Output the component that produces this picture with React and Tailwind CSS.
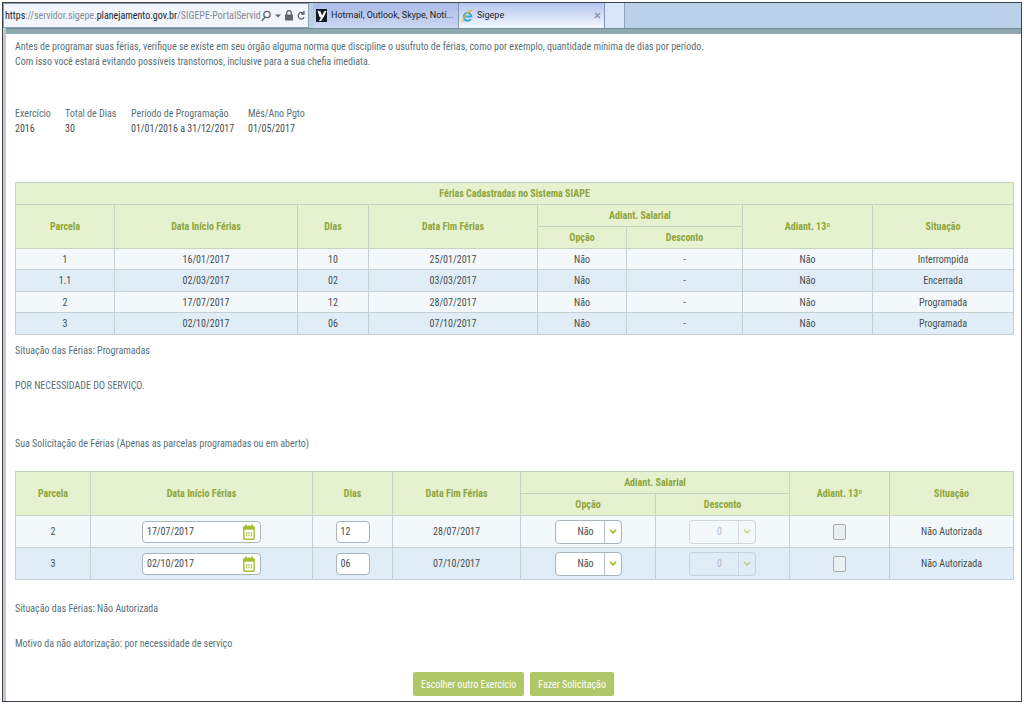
import React, { useState } from "react";

const cadastradas = [
  { parcela: "1", inicio: "16/01/2017", dias: "10", fim: "25/01/2017", situacao: "Interrompida" },
  { parcela: "1.1", inicio: "02/03/2017", dias: "02", fim: "03/03/2017", situacao: "Encerrada" },
  { parcela: "2", inicio: "17/07/2017", dias: "12", fim: "28/07/2017", situacao: "Programada" },
  { parcela: "3", inicio: "02/10/2017", dias: "06", fim: "07/10/2017", situacao: "Programada" },
];

const solicitadas = [
  { parcela: "2", inicio: "17/07/2017", dias: "12", fim: "28/07/2017" },
  { parcela: "3", inicio: "02/10/2017", dias: "06", fim: "07/10/2017" },
];

const resumo = [
  { label: "Exercício", value: "2016", width: "w-[50px]" },
  { label: "Total de Dias", value: "30", width: "w-[66px]" },
  { label: "Período de Programação", value: "01/01/2016 a 31/12/2017", width: "w-[117px]" },
  { label: "Mês/Ano Pgto", value: "01/05/2017", width: "w-[80px]" },
];

const cell = "border border-[#c3d0d3] p-0 text-center";
const head = "border border-[#c5d3c3] p-0 text-center font-bold";

const CalendarIcon = () => (
  <svg className="block h-4 w-3" viewBox="0 0 12 16" fill="none">
    <rect x="0.8" y="2.8" width="10.4" height="12.4" rx="1" stroke="#a3bf2f" strokeWidth="1.4" />
    <path d="M0.5 2.5h11v3.2H0.5z" fill="#a3bf2f" />
    <path d="M3 0.5v3M9 0.5v3" stroke="#a3bf2f" strokeWidth="1.8" />
    <path d="M5 1.5h2v1.5H5z" fill="#a3bf2f" />
    <path d="M3 9h1.3M5.4 9h1.3M7.8 9h1.3M3 11.5h1.3M5.4 11.5h1.3M7.8 11.5h1.3" stroke="#a3bf2f" strokeWidth="1.3" />
  </svg>
);

const SelectBox = ({ label, value, options, disabled }) => (
  <div
    className={
      disabled
        ? "relative mx-auto h-6 w-[67px] rounded border border-[#a9b8c2] opacity-50"
        : "relative mx-auto h-6 w-[67px] rounded border border-[#a9b4bb] bg-white"
    }
  >
    <select
      aria-label={label}
      defaultValue={value}
      disabled={disabled}
      className="block h-full w-full appearance-none bg-transparent pr-[18px] pl-[22px] text-left text-[#454e52] opacity-100 disabled:pl-[27px] disabled:text-[#76858c]"
    >
      {options.map((o) => (
        <option key={o}>{o}</option>
      ))}
    </select>
    <span className="pointer-events-none absolute inset-y-0 right-0 flex w-[17px] items-center justify-center border-l border-[#b4bfc5]">
      <svg className="h-[5px] w-2" viewBox="0 0 8 5" fill="none">
        <path d="M1 0.8l3 3 3-3" stroke="#a3bf2f" strokeWidth="1.8" />
      </svg>
    </span>
  </div>
);

/* Column header rows, shared by both tables */
const HeaderRows = () => (
  <>
    <tr className="h-[22px]">
      <th rowSpan={2} className={head}>Parcela</th>
      <th rowSpan={2} className={head}>Data Início Férias</th>
      <th rowSpan={2} className={head}>Dias</th>
      <th rowSpan={2} className={head}>Data Fim Férias</th>
      <th colSpan={2} className={head}>Adiant. Salarial</th>
      <th rowSpan={2} className={head}>Adiant. 13º</th>
      <th rowSpan={2} className={head}>Situação</th>
    </tr>
    <tr className="h-[22px]">
      <th className={head}>Opção</th>
      <th className={head}>Desconto</th>
    </tr>
  </>
);

const BrowserBar = () => (
  <header className="flex h-[25px] bg-[#bacfe8] font-[Roboto,sans-serif] text-[9px] text-[#1c2126]">
    <div className="flex w-[306px] items-center border border-[#8f9fb2] bg-[#f1f5fc] pl-px">
      <div className="w-[254px] font-['Roboto_Condensed',Roboto,sans-serif] text-[10px] whitespace-nowrap text-[#848b95]">
        <span className="text-[#1c2126]">https</span>://servidor.sigepe.
        <span className="text-[#1c2126]">planejamento.gov.br</span>/SIGEPE-PortalServid
      </div>
      <div className="flex flex-1 items-center justify-between pr-[3px] pl-[2px]">
        <button type="button" aria-label="Pesquisar">
          <svg className="h-3 w-[10px]" viewBox="0 0 10 12" fill="none" stroke="#5f666e" strokeWidth="1.3">
            <circle cx="6" cy="4.5" r="3.2" />
            <path d="M4 7L0.8 11" />
          </svg>
        </button>
        <button type="button" aria-label="Histórico">
          <svg className="h-1 w-[6px]" viewBox="0 0 6 4" fill="#5f666e">
            <path d="M0 0.5h6L3 3.5z" />
          </svg>
        </button>
        <svg className="h-[11px] w-2" viewBox="0 0 8 11" fill="none">
          <path d="M1.7 5V3a2.3 2.3 0 014.6 0v2" stroke="#5f666e" strokeWidth="1.3" />
          <rect y="4.5" width="8" height="6" fill="#5f666e" />
        </svg>
        <button type="button" aria-label="Atualizar">
          <svg className="h-[11px] w-2" viewBox="0 0 8 11" fill="none" stroke="#5f666e" strokeWidth="1.3">
            <path d="M6.5 3.6A3 3.3 0 107 7M7 0.8v3.2H4" />
          </svg>
        </button>
      </div>
    </div>
    <nav className="ml-1 flex">
      <button
        type="button"
        className="flex w-[146px] items-center gap-1 border-r border-[#8295b5] bg-gradient-to-b from-[#aabbe6] to-[#cbd8f2] pl-[3px] whitespace-nowrap"
      >
        <svg className="h-[13px] w-[11px] shrink-0" viewBox="0 0 11 13">
          <rect width="11" height="13" fill="#15191f" />
          <path d="M1.5 1.5l3 1L6 6.5l2.5-4.5h2L8 7.5l-3 4.5H3l2-3.5-1.5-.5z" fill="#fff" />
        </svg>
        Hotmail, Outlook, Skype, Notí...
      </button>
      <div className="flex w-[146px] items-center gap-1 border-r border-[#8295b5] bg-gradient-to-b from-[#b4c6f0] to-[#f4f7fd] pr-[3px] pl-[3px]">
        <svg className="h-[14px] w-[11px] shrink-0" viewBox="0 0 11 14" fill="none">
          <path d="M2.2 7.6h7.2a3.8 4 0 10-.6 2.4" stroke="#3aa5e0" strokeWidth="2" />
          <path d="M1 13C-.6 10 6 1.5 10.3 1.5" stroke="#e9b93c" strokeWidth="1.3" />
        </svg>
        <span className="flex-1">Sigepe</span>
        <button type="button" aria-label="Fechar guia">
          <svg className="h-[7px] w-[7px]" viewBox="0 0 7 7" stroke="#8b96ad" strokeWidth="1.5">
            <path d="M1 1l5 5M6 1L1 6" />
          </svg>
        </button>
      </div>
      <button type="button" aria-label="Nova guia" className="w-5 border-r border-[#8da3c0] bg-[#d9e6f8]" />
    </nav>
  </header>
);

const App = () => {
  const [marcados, setMarcados] = useState({});

  const toggle = (parcela) => setMarcados({ ...marcados, [parcela]: !marcados[parcela] });

  return (
    <div className="bg-white p-[2px]">
      <div className="border border-[#3f4347] bg-white">
        <BrowserBar />

        <div className="border-l-[3px] border-[#c3c8cd]">
          <div className="h-[6px] border-t border-[#6f8e98] bg-[#8ea9ae]" />

          <main className="px-[9px] pt-[5px] pb-[5px] font-['Roboto_Condensed',Roboto,sans-serif] text-[10px] leading-[15px] text-[#587078]">
            <p>
              Antes de programar suas férias, verifique se existe em seu órgão alguma norma que discipline o usufruto
              de férias, como por exemplo, quantidade mínima de dias por período.
            </p>
            <p>Com isso você estará evitando possíveis transtornos, inclusive para a sua chefia imediata.</p>

            <dl className="mt-[37px] flex whitespace-nowrap">
              {resumo.map((item) => (
                <div key={item.label} className={item.width}>
                  <dt>{item.label}</dt>
                  <dd className="text-[#454e52]">{item.value}</dd>
                </div>
              ))}
            </dl>

            {/* Férias já cadastradas */}
            <table className="mt-[46px] w-full table-fixed border-collapse">
              <colgroup>
                <col className="w-[99px]" />
                <col className="w-[183px]" />
                <col className="w-[71px]" />
                <col className="w-[169px]" />
                <col className="w-[89px]" />
                <col className="w-[116px]" />
                <col className="w-[130px]" />
                <col className="w-[141px]" />
              </colgroup>
              <thead className="bg-[#e5f1cf] text-[#8fa63c]">
                <tr className="h-[22px]">
                  <th colSpan={8} className={head}>Férias Cadastradas no Sistema SIAPE</th>
                </tr>
                <HeaderRows />
              </thead>
              <tbody className="text-[#454e52]">
                {cadastradas.map((f) => (
                  <tr key={f.parcela} className="h-[21px] bg-[#f3f8fb] even:h-[22px] even:bg-[#e0edf6]">
                    <td className={cell}>{f.parcela}</td>
                    <td className={cell}>{f.inicio}</td>
                    <td className={cell}>{f.dias}</td>
                    <td className={cell}>{f.fim}</td>
                    <td className={cell}>Não</td>
                    <td className={cell}>-</td>
                    <td className={cell}>Não</td>
                    <td className={cell}>{f.situacao}</td>
                  </tr>
                ))}
              </tbody>
            </table>

            <p className="mt-2">Situação das Férias: Programadas</p>
            <p className="mt-5">POR NECESSIDADE DO SERVIÇO.</p>
            <p className="mt-[43px]">Sua Solicitação de Férias (Apenas as parcelas programadas ou em aberto)</p>

            {/* Solicitação */}
            <table className="mt-5 w-full table-fixed border-collapse">
              <colgroup>
                <col className="w-[75px]" />
                <col className="w-[222px]" />
                <col className="w-[80px]" />
                <col className="w-[128px]" />
                <col className="w-[135px]" />
                <col className="w-[134px]" />
                <col className="w-[100px]" />
                <col className="w-[124px]" />
              </colgroup>
              <thead className="bg-[#e5f1cf] text-[#8fa63c]">
                <HeaderRows />
              </thead>
              <tbody className="text-[#454e52]">
                {solicitadas.map((f) => (
                  <tr key={f.parcela} className="h-8 bg-[#f3f8fb] even:bg-[#e0edf6]">
                    <td className={cell}>{f.parcela}</td>
                    <td className={cell}>
                      <div className="mx-auto flex h-[22px] w-[119px] items-center rounded border border-[#a9b4bb] bg-white pr-[5px] pl-1">
                        <input
                          type="text"
                          aria-label={"Data início da parcela " + f.parcela}
                          defaultValue={f.inicio}
                          className="w-full min-w-0 flex-1"
                        />
                        <button type="button" aria-label="Abrir calendário">
                          <CalendarIcon />
                        </button>
                      </div>
                    </td>
                    <td className={cell}>
                      <input
                        type="text"
                        aria-label={"Dias da parcela " + f.parcela}
                        defaultValue={f.dias}
                        className="mx-auto block h-[22px] w-[34px] rounded border border-[#a9b4bb] bg-white px-1"
                      />
                    </td>
                    <td className={cell}>{f.fim}</td>
                    <td className={cell}>
                      <SelectBox label={"Opção da parcela " + f.parcela} value="Não" options={["Não", "Sim"]} />
                    </td>
                    <td className={cell}>
                      <SelectBox label={"Desconto da parcela " + f.parcela} value="0" options={["0"]} disabled />
                    </td>
                    <td className={cell}>
                      <input
                        type="checkbox"
                        aria-label={"Adiantamento do 13º da parcela " + f.parcela}
                        checked={!!marcados[f.parcela]}
                        onChange={() => toggle(f.parcela)}
                        className="mx-auto block h-4 w-[13px] appearance-none rounded-xs border border-[#a3adb0] bg-[#e9f0f0] checked:bg-[#abc560]"
                      />
                    </td>
                    <td className={cell}>Não Autorizada</td>
                  </tr>
                ))}
              </tbody>
            </table>

            <p className="mt-[21px]">Situação das Férias: Não Autorizada</p>
            <p className="mt-5">Motivo da não autorização: por necessidade de serviço</p>

            <div className="mt-[21px] flex justify-center gap-[6px] text-white">
              <button type="button" className="h-6 rounded-xs bg-[#aec767] px-2">
                Escolher outro Exercício
              </button>
              <button type="button" className="h-6 rounded-xs bg-[#aec767] px-2">
                Fazer Solicitação
              </button>
            </div>
          </main>
        </div>
      </div>
    </div>
  );
};

export default App;
